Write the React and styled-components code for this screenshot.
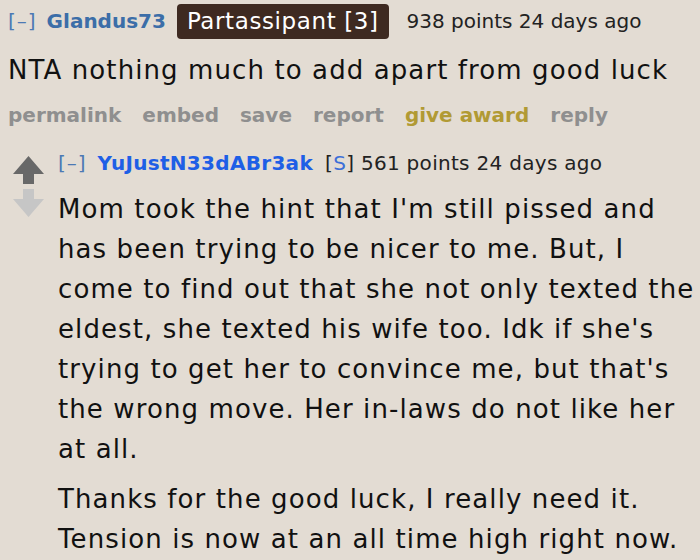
import React from "react";
import styled, { createGlobalStyle } from "styled-components";

const Global = createGlobalStyle`
  html, body { margin: 0; padding: 0; background: #e3dcd3; }
  body { font-family: "DejaVu Sans", Verdana, sans-serif; color: #111; overflow: hidden; }
`;

const Page = styled.div`
  width: 700px;
  height: 560px;
  padding: 4px 0 0 8px;
  box-sizing: border-box;
  overflow: hidden;
`;

const Tagline = styled.div`
  display: flex;
  align-items: center;
  font-size: 20px;
  line-height: ${(p) => p.$lh || 35}px;
  white-space: nowrap;
`;

const Toggle = styled.span`
  color: #4c79b4;
  letter-spacing: 1px;
  margin-right: ${(p) => p.$mr || 10}px;
`;

const Author = styled.span`
  font-weight: bold;
  color: ${(p) => p.$color};
  letter-spacing: ${(p) => p.$ls || 0}px;
  margin-right: ${(p) => p.$mr || 10}px;
`;

const Flair = styled.span`
  background: #3e2a21;
  color: #fff;
  border-radius: 4px;
  font-size: 23px;
  letter-spacing: 0.6px;
  padding: 0 10px;
  line-height: 35px;
  margin-right: 18px;
`;

const Meta = styled.span`
  color: #222;
`;

const Submitter = styled.span`
  color: #222;
  letter-spacing: 0.3px;
  & b { color: #3d6fd8; font-weight: normal; }
`;

const Body = styled.div`
  font-size: 26px;
  line-height: 40px;
  letter-spacing: 1.1px;
  margin-top: ${(p) => p.$mt || 0}px;
  padding-right: 4px;
  & p { margin: 0; }
  & p + p { margin-top: 10px; }
`;

const Actions = styled.ul`
  list-style: none;
  margin: 12px 0 0;
  padding: 0;
  display: flex;
  gap: 21px;
  font-size: 20px;
  font-weight: bold;
  line-height: 26px;
`;

const Action = styled.li`
  color: ${(p) => (p.$gold ? "#b19a34" : "#8f8f8f")};
`;

const Child = styled.div`
  display: flex;
  margin-top: 20px;
`;

const Votes = styled.div`
  width: 50px;
  flex: none;
  display: flex;
  flex-direction: column;
  align-items: flex-start;
  padding: 8px 0 0 5px;
  box-sizing: border-box;
  gap: 5px;
`;

const ChildMain = styled.div`
  flex: 1;
  min-width: 0;
`;

const Arrow = ({ down, color }) => (
  <svg width="31" height="28" viewBox="0 0 31 28">
    <path
      d="M15.5 0 L31 18 L21 18 L21 28 L10 28 L10 18 L0 18 Z"
      fill={color}
      transform={down ? "rotate(180 15.5 14)" : undefined}
    />
  </svg>
);

export default function App() {
  return (
    <>
      <Global />
      <Page>
        <Tagline>
          <Toggle>[–]</Toggle>
          <Author $color="#3c6ea8" $mr={11}>Glandus73</Author>
          <Flair>Partassipant [3]</Flair>
          <Meta>938 points 24 days ago</Meta>
        </Tagline>
        <Body $mt={11}>NTA nothing much to add apart from good luck</Body>
        <Actions>
          <Action>permalink</Action>
          <Action>embed</Action>
          <Action>save</Action>
          <Action>report</Action>
          <Action $gold>give award</Action>
          <Action>reply</Action>
        </Actions>
        <Child>
          <Votes>
            <Arrow color="#686868" />
            <Arrow down color="#c6c6c6" />
          </Votes>
          <ChildMain>
            <Tagline $lh={30}>
              <Toggle $mr={11}>[–]</Toggle>
              <Author $color="#1e5fe6" $ls={0.3} $mr={12}>YuJustN33dABr3ak</Author>
              <Submitter>
                [<b>S</b>] 561 points 24 days ago
              </Submitter>
            </Tagline>
            <Body $mt={11}>
              <p>
                Mom took the hint that I'm still pissed and has been trying to be nicer to me. But, I come to find out that she not only texted the eldest, she texted his wife too. Idk if she's trying to get her to convince me, but that's the wrong move. Her in-laws do not like her at all.
              </p>
              <p>
                Thanks for the good luck, I really need it. Tension is now at an all time high right now.
              </p>
            </Body>
          </ChildMain>
        </Child>
      </Page>
    </>
  );
}
